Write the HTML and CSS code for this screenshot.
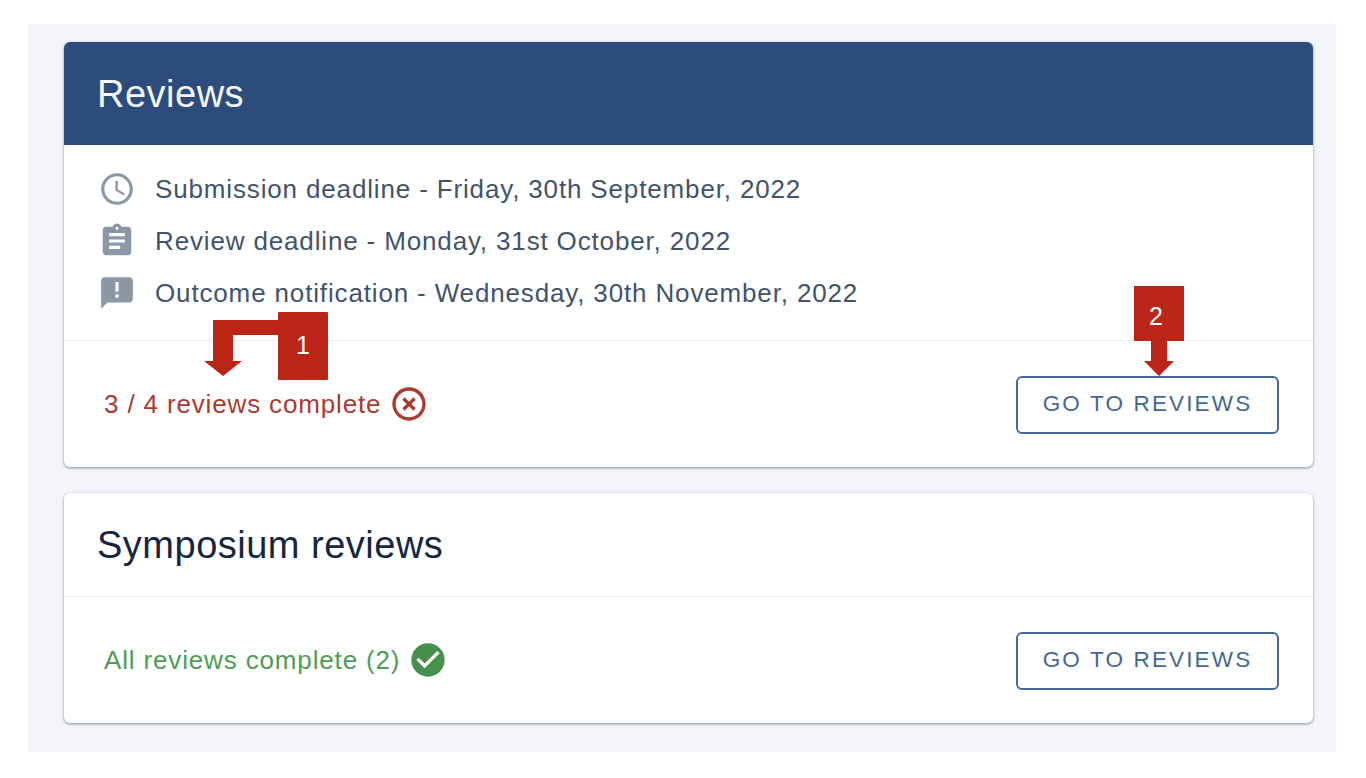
FILE: index.html
```html
<!DOCTYPE html>
<html lang="en">
<head>
<meta charset="utf-8">
<title>Reviews</title>
<link rel="stylesheet" href="styles.css">
</head>
<body>
<main class="panel">
  <section class="card">
    <h2 class="head head-primary">Reviews</h2>
    <ul class="dates">
      <li class="date">
        <svg class="date-icon" viewBox="0 0 24 24"><path d="M11.99 2C6.47 2 2 6.48 2 12s4.47 10 9.99 10C17.52 22 22 17.52 22 12S17.52 2 11.99 2zM12 20c-4.42 0-8-3.58-8-8s3.58-8 8-8 8 3.58 8 8-3.58 8-8 8zm.5-13H11v6l5.25 3.15.75-1.23-4.5-2.67z"/></svg>
        <span>Submission deadline - Friday, 30th September, 2022</span>
      </li>
      <li class="date">
        <svg class="date-icon" viewBox="0 0 24 24"><path d="M19 3h-4.18C14.4 1.84 13.3 1 12 1c-1.3 0-2.4.84-2.82 2H5c-1.1 0-2 .9-2 2v14c0 1.1.9 2 2 2h14c1.1 0 2-.9 2-2V5c0-1.1-.9-2-2-2zm-7 0c.55 0 1 .45 1 1s-.45 1-1 1-1-.45-1-1 .45-1 1-1zm2 14H7v-2h7v2zm3-4H7v-2h10v2zm0-4H7V7h10v2z"/></svg>
        <span>Review deadline - Monday, 31st October, 2022</span>
      </li>
      <li class="date">
        <svg class="date-icon" viewBox="0 0 24 24"><path d="M20 2H4c-1.1 0-1.99.9-1.99 2L2 22l4-4h14c1.1 0 2-.9 2-2V4c0-1.1-.9-2-2-2zm-7 9h-2V5h2v6zm0 4h-2v-2h2v2z"/></svg>
        <span>Outcome notification - Wednesday, 30th November, 2022</span>
      </li>
    </ul>
    <div class="foot">
      <div class="status status-bad">
        <span>3 / 4 reviews complete</span>
        <svg class="status-icon" viewBox="0 0 24 24"><path d="M14.59 8 12 10.59 9.41 8 8 9.41 10.59 12 8 14.59 9.41 16 12 13.41 14.59 16 16 14.59 13.41 12 16 9.41 14.59 8zM12 2C6.47 2 2 6.47 2 12s4.47 10 10 10 10-4.47 10-10S17.53 2 12 2zm0 18c-4.41 0-8-3.59-8-8s3.59-8 8-8 8 3.59 8 8-3.59 8-8 8z"/></svg>
      </div>
      <a class="btn" href="#">GO TO REVIEWS</a>
    </div>
  </section>
  <section class="card">
    <h2 class="head">Symposium reviews</h2>
    <div class="foot foot-ruled">
      <div class="status status-good">
        <span>All reviews complete (2)</span>
        <svg class="status-icon" viewBox="0 0 24 24"><path d="M12 2C6.48 2 2 6.48 2 12s4.48 10 10 10 10-4.48 10-10S17.52 2 12 2zm-2 15-5-5 1.41-1.41L10 14.17l7.59-7.59L19 8l-9 9z"/></svg>
      </div>
      <a class="btn" href="#">GO TO REVIEWS</a>
    </div>
  </section>
</main>

<svg class="callout callout-one" viewBox="0 0 75 68"><path d="M75 8H9V49H0L19 64 38 49H29V23H75z"/></svg>
<div class="tag tag-one">1</div>
<svg class="callout callout-two" viewBox="0 0 30 35"><path d="M7 0H23V20H30L15 35 0 20H7z"/></svg>
<div class="tag tag-two">2</div>
</body>
</html>
```
FILE: styles.css
```css
* { box-sizing: border-box; }

html, body { margin: 0; height: 100%; background: #fff; }

body {
  padding: 24px 30px 26px 28px;
  font-family: "Liberation Sans", Arial, sans-serif;
  position: relative;
}

.panel {
  height: 728px;
  background: #f3f5fa;
  padding: 18px 23px 0 36px;
  display: flex;
  flex-direction: column;
  gap: 26px;
}

.card {
  background: #fff;
  border-radius: 6px;
  box-shadow: 0 1px 3px rgba(40, 50, 70, .55);
  overflow: hidden;
}

.head {
  margin: 0;
  height: 103px;
  padding: 2px 33px 0;
  display: flex;
  align-items: center;
  font-size: 38px;
  font-weight: 400;
  color: #16263f;
  letter-spacing: .5px;
}

.head-primary {
  background: #2c4c7c;
  color: #f4f6fa;
}

.dates {
  list-style: none;
  margin: 0;
  padding: 26px 0 29px 34px;
  display: flex;
  flex-direction: column;
  gap: 16px;
}

.date {
  display: flex;
  align-items: center;
  gap: 19px;
  height: 36px;
  font-size: 26px;
  letter-spacing: .85px;
  color: #43536b;
}

.date-icon {
  width: 38px;
  height: 38px;
  flex: none;
  fill: #8b97a6;
}

.foot {
  height: 127px;
  padding: 0 34px 0 40px;
  border-top: 1px solid #eceef2;
  display: flex;
  align-items: center;
  justify-content: space-between;
}

.status {
  display: flex;
  align-items: center;
  gap: 8px;
  font-size: 26px;
  letter-spacing: .85px;
}

.status-bad { color: #ab3a30; fill: #ab3a30; }
.status-good { color: #4f9c55; fill: #46904c; }

.status-icon { width: 40px; height: 40px; flex: none; }

.btn {
  width: 263px;
  height: 58px;
  margin-top: 1px;
  padding-bottom: 2px;
  display: flex;
  align-items: center;
  justify-content: center;
  border: 2px solid #47699a;
  border-radius: 6px;
  color: #456794;
  font-size: 22.5px;
  letter-spacing: 2.15px;
  text-decoration: none;
}

.tag {
  position: absolute;
  width: 50px;
  display: flex;
  align-items: center;
  justify-content: center;
  background: #ba2518;
  color: #fff;
  font-size: 25px;
}

.tag-one { left: 278px; top: 312px; height: 68px; padding-bottom: 2px; border-radius: 1px; }
.tag-two { left: 1134px; top: 286px; height: 55px; padding: 6px 6px 0 0; }

.callout { position: absolute; fill: #ba2518; }
.callout-one { left: 204px; top: 312px; width: 75px; height: 68px; }
.callout-two { left: 1144px; top: 341px; width: 30px; height: 35px; }
```
